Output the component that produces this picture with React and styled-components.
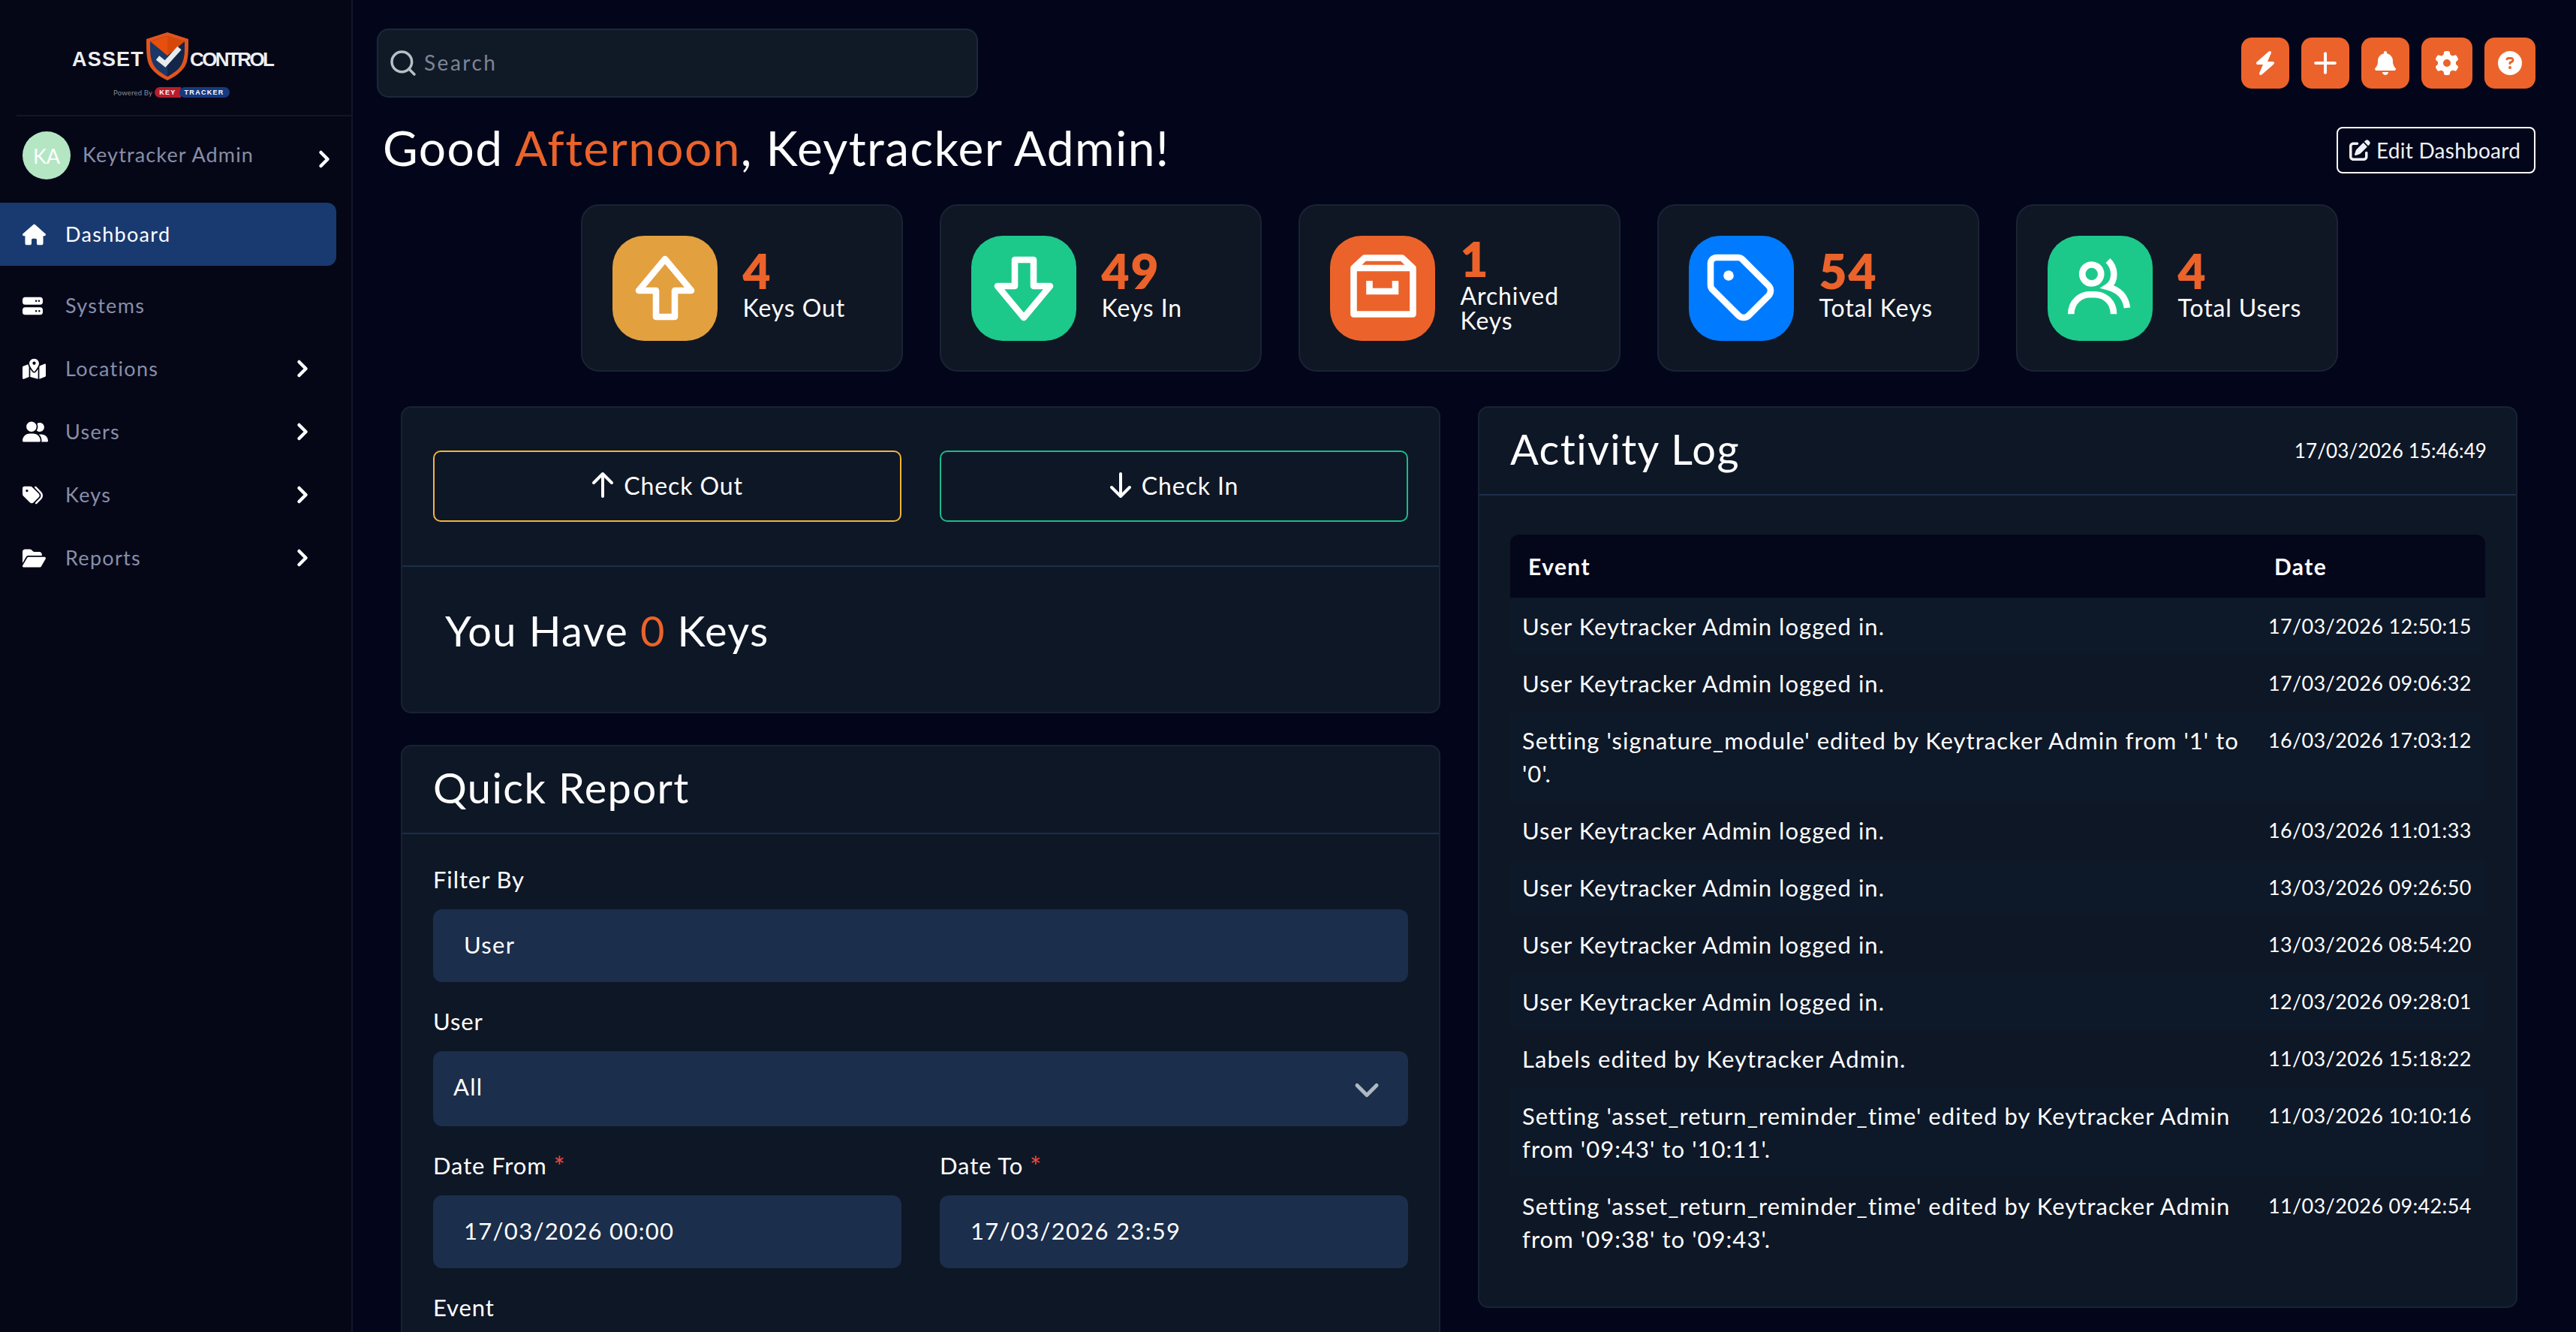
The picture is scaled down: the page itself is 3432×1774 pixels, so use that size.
import React from 'react';
import styled, { createGlobalStyle } from 'styled-components';
import { ChevronDown, ChevronRight, Plus, Search } from 'lucide-react';
import {
  FaBell,
  FaBolt,
  FaCircleQuestion,
  FaFolderOpen,
  FaGear,
  FaHouse,
  FaMapLocationDot,
  FaPenToSquare,
  FaServer,
  FaTags,
  FaUserGroup
} from 'react-icons/fa6';

const ORANGE = '#eb632a';

const GlobalStyle = createGlobalStyle`
  html, body {
    margin: 0;
    height: 100%;
    background: #03061a;
    color: #fff;
    font-family: Lato, "Noto Sans", sans-serif;
  }
  * { box-sizing: border-box; }
`;

const Page = styled.div`
  display: flex;
  height: 100vh;
  overflow: hidden;
`;

const Sidebar = styled.aside`
  flex: 0 0 470px;
  border-right: 2px solid #10172a;
  background: #050717;
`;

const LogoBlock = styled.div`
  height: 155px;
  margin-left: 22px;
  border-bottom: 2px solid #10172a;
  padding-top: 43px;
`;

const LogoRow = styled.div`
  display: flex;
  align-items: center;
  margin-left: 74px;
  height: 64px;
`;

const LogoWord = styled.span`
  font-family: "Liberation Sans", sans-serif;
  font-weight: 700;
  font-size: ${p => p.$size}px;
  letter-spacing: ${p => p.$spacing}px;
  color: #eceff1;
  padding-top: 8px;
`;

const ShieldSvg = styled.svg`
  flex: none;
  margin: 0 2px 0 3px;
`;

const PoweredRow = styled.div`
  display: flex;
  align-items: center;
  margin: 9px 0 0 129px;
  height: 14px;
  font-size: 9.5px;
  letter-spacing: 0.2px;
  color: #8a8d96;
`;

const KeyPill = styled.span`
  margin-left: 3px;
  padding: 0 6px 0 6px;
  height: 14px;
  line-height: 14px;
  border-radius: 7px 0 0 7px;
  background: #b81d2c;
  color: #fff;
  font-family: "Liberation Sans", sans-serif;
  font-weight: 700;
  font-size: 9px;
  letter-spacing: 1.3px;
`;

const TrackerPill = styled(KeyPill)`
  margin-left: -2px;
  padding: 0 7px;
  border-radius: 7px;
  background: #16397f;
`;

const UserRow = styled.div`
  display: flex;
  align-items: center;
  height: 64px;
  margin: 20px 0 31px 30px;
`;

const Avatar = styled.div`
  flex: none;
  display: flex;
  align-items: center;
  justify-content: center;
  width: 64px;
  height: 64px;
  border-radius: 50%;
  background: #b4e6c4;
  color: #fff;
  font-size: 27px;
`;

const UserName = styled.span`
  flex: 1;
  margin-left: 16px;
  padding-bottom: 4px;
  font-size: 27px;
  letter-spacing: 1.15px;
  color: #888ea8;
`;

const UserChevron = styled(ChevronRight)`
  margin: 10px 18px 0 0;
  color: #fff;
`;

const Nav = styled.nav`
  width: 448px;
`;

const NavItem = styled.a`
  display: flex;
  align-items: center;
  height: 84px;
  padding: 0 27px 0 30px;
  margin-bottom: ${p => (p.$active ? 11 : 0)}px;
  border-radius: 0 12px 12px 0;
  background: ${p => (p.$active ? '#193a70' : 'transparent')};
  color: ${p => (p.$active ? '#fff' : '#888ea8')};
  font-size: 27px;
  letter-spacing: 1.3px;
`;

const NavIcon = styled.span`
  flex: 0 0 57px;
  display: flex;
  color: #fff;
`;

const NavLabel = styled.span`
  flex: 1;
  padding-bottom: 2px;
`;

const Main = styled.main`
  flex: 1;
  min-width: 0;
  padding: 38px 54px 0 32px;
`;

const TopBar = styled.div`
  display: flex;
  align-items: center;
  justify-content: space-between;
  height: 92px;
`;

const SearchBox = styled.label`
  display: flex;
  align-items: center;
  width: 801px;
  height: 92px;
  padding-left: 13px;
  border: 2px solid #1d273b;
  border-radius: 16px;
  background: #101926;
`;

const SearchInput = styled.input`
  flex: 1;
  margin: 0 0 2px 6px;
  border: 0;
  outline: 0;
  background: transparent;
  font: inherit;
  font-size: 28px;
  letter-spacing: 2.5px;
  color: #fff;
  &::placeholder { color: #7c8496; opacity: 1; }
`;

const TopActions = styled.div`
  display: flex;
  gap: 16px;
`;

const TopButton = styled.button`
  display: flex;
  align-items: center;
  justify-content: center;
  width: ${p => (p.$wide ? 68 : 64)}px;
  height: 68px;
  padding: 0;
  border: 0;
  border-radius: 14px;
  background: ${ORANGE};
  color: #fff;
`;

const GreetingRow = styled.div`
  display: flex;
  justify-content: space-between;
  align-items: flex-start;
  height: 76px;
  margin-top: 35px;
  padding-left: 8px;
`;

const Greeting = styled.h1`
  margin: 0;
  font-size: 64px;
  font-weight: 400;
  line-height: 64px;
  letter-spacing: 1.4px;
`;

const Accent = styled.span`
  color: ${ORANGE};
`;

const EditButton = styled.button`
  display: flex;
  align-items: center;
  gap: 8px;
  height: 62px;
  width: 265px;
  margin-top: 4px;
  padding: 0 0 0 15px;
  border: 2px solid #fff;
  border-radius: 8px;
  background: transparent;
  color: #eef1f6;
  font: inherit;
  font-size: 28px;
  letter-spacing: 0.25px;
`;

const Content = styled.div`
  margin: 31px 24px 0 32px;
`;

const StatRow = styled.div`
  display: flex;
  justify-content: center;
  gap: 49px;
`;

const StatCard = styled.div`
  display: flex;
  align-items: center;
  flex: none;
  width: 429px;
  height: 223px;
  padding: 0 30px 0 40px;
  border: 2px solid #1a2334;
  border-radius: 24px;
  background: #0f1724;
`;

const StatTile = styled.div`
  flex: none;
  width: 140px;
  height: 140px;
  border-radius: 42px;
  background: ${p => p.$color};
`;

const StatText = styled.div`
  margin-left: 34px;
  padding-bottom: 10px;
`;

const StatNumber = styled.div`
  font-size: 64px;
  line-height: 60px;
  font-weight: 800;
  letter-spacing: 2px;
  color: ${ORANGE};
`;

const StatLabel = styled.div`
  margin-top: 2px;
  font-size: 32px;
  line-height: 33px;
  letter-spacing: 0.9px;
`;

const Columns = styled.div`
  display: grid;
  grid-template-columns: 1fr 1fr;
  gap: 50px;
  margin-top: 46px;
`;

const Panel = styled.section`
  margin-bottom: 42px;
  border: 2px solid #192233;
  border-radius: 14px;
  background: #0e1726;
`;

const PanelHeader = styled.div`
  display: flex;
  align-items: center;
  justify-content: space-between;
  height: 117px;
  padding: 0 39px 0 41px;
  border-bottom: 2px solid #1b2e4b;
`;

const PanelTitle = styled.h2`
  margin: -6px 0 0;
  font-size: 56px;
  font-weight: 400;
  letter-spacing: 1.4px;
`;

const HeaderStamp = styled.span`
  margin-top: -2px;
  font-size: 26px;
  letter-spacing: 0.1px;
`;

const CheckRow = styled.div`
  display: grid;
  grid-template-columns: 1fr 1fr;
  gap: 51px;
  padding: 57px 41px 58px;
  border-bottom: 2px solid #1b2e4b;
`;

const CheckButton = styled.button`
  display: flex;
  align-items: center;
  justify-content: center;
  gap: 13px;
  height: 95px;
  padding: 0 0 3px;
  border: 2px solid ${p => p.$color};
  border-radius: 10px;
  background: transparent;
  color: #fff;
  font: inherit;
  font-size: 32px;
  letter-spacing: 0.9px;
`;

const KeyCount = styled.div`
  display: flex;
  align-items: center;
  height: 193px;
  padding: 0 0 25px 57px;
  font-size: 56px;
  letter-spacing: 1.4px;
`;

const FormBody = styled.div`
  padding: 40px 41px 0;
`;

const FieldGrid = styled.div`
  display: grid;
  grid-template-columns: 1fr 1fr;
  gap: 51px;
`;

const Field = styled.div`
  margin-bottom: 32px;
`;

const FieldLabel = styled.div`
  height: 40px;
  margin-bottom: 20px;
  font-size: 31px;
  line-height: 40px;
  letter-spacing: 0.9px;
`;

const Required = styled.span`
  font-size: 36px;
  line-height: 30px;
  vertical-align: -3px;
  color: #e8483f;
`;

const Control = styled.div`
  display: flex;
  align-items: center;
  justify-content: space-between;
  height: ${p => (p.$tall ? 100 : 97)}px;
  padding: 0 29px 4px ${p => (p.$tall ? 27 : 41)}px;
  border-radius: 12px;
  background: #1b2e4b;
  font-size: 31px;
  letter-spacing: 1.3px;
`;

const SelectText = styled.span`
  margin-bottom: 2px;
`;

const SelectArrow = styled(ChevronDown)`
  margin-top: 8px;
  color: #aeb9c2;
`;

const LogBody = styled.div`
  padding: 52px 41px;
`;

const LogTable = styled.table`
  width: 100%;
  border-collapse: collapse;
  table-layout: fixed;
`;

const HeadCell = styled.th`
  height: 84px;
  padding: 0 0 0 ${p => (p.$date ? 14 : 24)}px;
  width: ${p => (p.$date ? '295px' : 'auto')};
  background: #04071a;
  text-align: left;
  font-size: 30px;
  font-weight: 700;
  letter-spacing: 1.4px;
  &:first-child { border-top-left-radius: 12px; }
  &:last-child { border-top-right-radius: 12px; }
`;

const Row = styled.tr`
  background: ${p => (p.$odd ? '#0d1828' : '#0e1726')};
`;

const EventCell = styled.td`
  padding: 16px 12px 16px 16px;
  vertical-align: top;
  font-size: 31px;
  line-height: 44px;
  letter-spacing: 1.05px;
`;

const DateCell = styled.td`
  padding: 16px 0 16px 6px;
  vertical-align: top;
  white-space: nowrap;
  font-size: 27px;
  line-height: 44px;
  letter-spacing: 0.35px;
`;

const strokeProps = { fill: 'none', stroke: '#fff', strokeWidth: 8.6 };

const OutlineUp = () => (
  <svg width="140" height="140" viewBox="0 0 140 140">
    <path d="M70 31 L35 73 H58 V108 H83 V73 H105 Z" {...strokeProps} strokeLinejoin="round" />
  </svg>
);

const OutlineDown = () => (
  <svg width="140" height="140" viewBox="0 0 140 140">
    <path d="M70 109 L35 67 H58 V32 H83 V67 H105 Z" {...strokeProps} strokeLinejoin="round" />
  </svg>
);

const OutlineArchive = () => (
  <svg width="140" height="140" viewBox="0 0 140 140">
    <path d="M31.5 43 L46 29.5 H96 L110.5 43 V104.5 H31.5 Z M31.5 43 H110.5" {...strokeProps} strokeLinejoin="round" />
    <path d="M52.5 60 V74 H87 V60" {...strokeProps} />
  </svg>
);

const OutlineTag = () => (
  <svg width="140" height="140" viewBox="0 0 140 140">
    <g transform="translate(21 21) scale(4)">
      <path
        d="M12.586 2.586A2 2 0 0 0 11.172 2H4a2 2 0 0 0-2 2v7.172a2 2 0 0 0 .586 1.414l8.704 8.704a2.426 2.426 0 0 0 3.42 0l6.58-6.58a2.426 2.426 0 0 0 0-3.42z"
        fill="none"
        stroke="#fff"
        strokeWidth="2.15"
      />
      <circle cx="8" cy="8" r="1.7" fill="#fff" />
    </g>
  </svg>
);

const OutlineUsers = () => (
  <svg width="140" height="140" viewBox="0 0 140 140">
    <circle cx="58.7" cy="51" r="12.5" {...strokeProps} />
    <path d="M31.3 104.3 C31.3 88 44 78.3 56 78.3 H63 C76 78.3 88 88 88 104.3" {...strokeProps} />
    <path d="M80.5 33 C90 42 92 60 80 68 C96 72 104 82 106 96" {...strokeProps} />
  </svg>
);

const CheckArrow = ({ down }) => (
  <svg width="30" height="36" viewBox="0 0 30 36" fill="none" stroke="#fff" strokeWidth="4" strokeLinecap="round" strokeLinejoin="round">
    <path d={down ? 'M15 3 V33 M3 21 L15 33 L27 21' : 'M15 33 V3 M3 15 L15 3 L27 15'} />
  </svg>
);

const Shield = () => (
  <ShieldSvg width="56" height="64" viewBox="0 0 56 64">
    <path d="M28 0 L56 9 C56 24 56 34 53 42 C49 52 37 60 28 64 C19 60 7 52 3 42 C0 34 0 24 0 9 Z" fill="#e2541d" />
    <path d="M28 5 L51 12 C51 24 51 33 48 40 C45 49 35 55 28 59 C21 55 11 49 8 40 C5 33 5 24 5 12 Z" fill="#1b3767" />
    <path d="M28 31 L28 59 C35 55 45 49 48 40 C51 33 51 24 51 12 Z" fill="#13264a" />
    <path d="M28 5 L5 12 L28 31 L51 12 Z" fill="#e64f0c" />
    <path d="M28 5 L28 31 L51 12 Z" fill="#d8470a" />
    <path d="M15 34 L25 42 L44 21" fill="none" stroke="#e8eaec" strokeWidth="7" />
  </ShieldSvg>
);

const navItems = [
  { label: 'Dashboard', icon: <FaHouse size={31} />, active: true },
  { label: 'Systems', icon: <FaServer size={27} /> },
  { label: 'Locations', icon: <FaMapLocationDot size={31} />, more: true },
  { label: 'Users', icon: <FaUserGroup size={34} />, more: true },
  { label: 'Keys', icon: <FaTags size={27} />, more: true },
  { label: 'Reports', icon: <FaFolderOpen size={31} />, more: true }
];

const stats = [
  { number: 4, label: 'Keys Out', color: '#e2a03f', icon: <OutlineUp /> },
  { number: 49, label: 'Keys In', color: '#1cc98b', icon: <OutlineDown /> },
  { number: 1, label: 'Archived Keys', color: ORANGE, icon: <OutlineArchive /> },
  { number: 54, label: 'Total Keys', color: '#007bff', icon: <OutlineTag /> },
  { number: 4, label: 'Total Users', color: '#1cc98b', icon: <OutlineUsers /> }
];

const logRows = [
  ['User Keytracker Admin logged in.', '17/03/2026 12:50:15'],
  ['User Keytracker Admin logged in.', '17/03/2026 09:06:32'],
  ["Setting 'signature_module' edited by Keytracker Admin from '1' to '0'.", '16/03/2026 17:03:12'],
  ['User Keytracker Admin logged in.', '16/03/2026 11:01:33'],
  ['User Keytracker Admin logged in.', '13/03/2026 09:26:50'],
  ['User Keytracker Admin logged in.', '13/03/2026 08:54:20'],
  ['User Keytracker Admin logged in.', '12/03/2026 09:28:01'],
  ['Labels edited by Keytracker Admin.', '11/03/2026 15:18:22'],
  ["Setting 'asset_return_reminder_time' edited by Keytracker Admin from '09:43' to '10:11'.", '11/03/2026 10:10:16'],
  ["Setting 'asset_return_reminder_time' edited by Keytracker Admin from '09:38' to '09:43'.", '11/03/2026 09:42:54']
];

const App = () => (
  <Page>
    <GlobalStyle />
    <Sidebar>
      <LogoBlock>
        <LogoRow>
          <LogoWord $size={27} $spacing={1.2}>ASSET</LogoWord>
          <Shield />
          <LogoWord $size={26} $spacing={-2.6}>CONTROL</LogoWord>
        </LogoRow>
        <PoweredRow>
          Powered By
          <KeyPill>KEY</KeyPill>
          <TrackerPill>TRACKER</TrackerPill>
        </PoweredRow>
      </LogoBlock>
      <UserRow>
        <Avatar>KA</Avatar>
        <UserName>Keytracker Admin</UserName>
        <UserChevron size={36} strokeWidth={3} />
      </UserRow>
      <Nav>
        {navItems.map(item => (
          <NavItem key={item.label} $active={item.active}>
            <NavIcon>{item.icon}</NavIcon>
            <NavLabel>{item.label}</NavLabel>
            {item.more && <ChevronRight size={36} strokeWidth={3} color="#fff" />}
          </NavItem>
        ))}
      </Nav>
    </Sidebar>
    <Main>
      <TopBar>
        <SearchBox>
          <Search size={40} strokeWidth={2.1} color="#b8bfc5" />
          <SearchInput placeholder="Search" />
        </SearchBox>
        <TopActions>
          <TopButton><FaBolt size={32} /></TopButton>
          <TopButton><Plus size={44} strokeWidth={2.2} /></TopButton>
          <TopButton><FaBell size={32} /></TopButton>
          <TopButton $wide><FaGear size={32} /></TopButton>
          <TopButton $wide><FaCircleQuestion size={32} /></TopButton>
        </TopActions>
      </TopBar>
      <GreetingRow>
        <Greeting>
          Good <Accent>Afternoon</Accent>, Keytracker Admin!
        </Greeting>
        <EditButton>
          <FaPenToSquare size={28} />
          Edit Dashboard
        </EditButton>
      </GreetingRow>
      <Content>
        <StatRow>
          {stats.map(stat => (
            <StatCard key={stat.label}>
              <StatTile $color={stat.color}>{stat.icon}</StatTile>
              <StatText>
                <StatNumber>{stat.number}</StatNumber>
                <StatLabel>{stat.label}</StatLabel>
              </StatText>
            </StatCard>
          ))}
        </StatRow>
        <Columns>
          <div>
            <Panel>
              <CheckRow>
                <CheckButton $color="#f3b53c">
                  <CheckArrow />
                  Check Out
                </CheckButton>
                <CheckButton $color="#19bd8a">
                  <CheckArrow down />
                  Check In
                </CheckButton>
              </CheckRow>
              <KeyCount>
                <span>
                  You Have <Accent>0</Accent> Keys
                </span>
              </KeyCount>
            </Panel>
            <Panel>
              <PanelHeader>
                <PanelTitle>Quick Report</PanelTitle>
              </PanelHeader>
              <FormBody>
                <Field>
                  <FieldLabel>Filter By</FieldLabel>
                  <Control>User</Control>
                </Field>
                <Field>
                  <FieldLabel>User</FieldLabel>
                  <Control $tall>
                    <SelectText>All</SelectText>
                    <SelectArrow size={52} strokeWidth={2.3} />
                  </Control>
                </Field>
                <FieldGrid>
                  <Field>
                    <FieldLabel>Date From <Required>*</Required></FieldLabel>
                    <Control>17/03/2026 00:00</Control>
                  </Field>
                  <Field>
                    <FieldLabel>Date To <Required>*</Required></FieldLabel>
                    <Control>17/03/2026 23:59</Control>
                  </Field>
                </FieldGrid>
                <Field>
                  <FieldLabel>Event</FieldLabel>
                  <Control $tall />
                </Field>
              </FormBody>
            </Panel>
          </div>
          <div>
            <Panel>
              <PanelHeader>
                <PanelTitle>Activity Log</PanelTitle>
                <HeaderStamp>17/03/2026 15:46:49</HeaderStamp>
              </PanelHeader>
              <LogBody>
                <LogTable>
                  <thead>
                    <tr>
                      <HeadCell>Event</HeadCell>
                      <HeadCell $date>Date</HeadCell>
                    </tr>
                  </thead>
                  <tbody>
                    {logRows.map(([event, date], i) => (
                      <Row key={i} $odd={i % 2 === 0}>
                        <EventCell>{event}</EventCell>
                        <DateCell>{date}</DateCell>
                      </Row>
                    ))}
                  </tbody>
                </LogTable>
              </LogBody>
            </Panel>
          </div>
        </Columns>
      </Content>
    </Main>
  </Page>
);

export default App;
